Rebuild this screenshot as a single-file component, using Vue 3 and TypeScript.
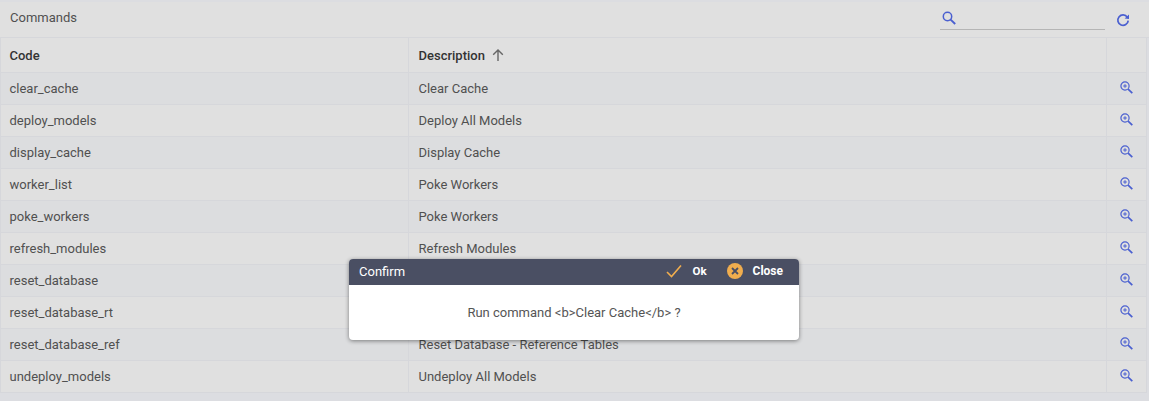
<script setup lang="ts">
interface Command { code: string; description: string }
const commands: Command[] = [
  { code: 'clear_cache', description: 'Clear Cache' },
  { code: 'deploy_models', description: 'Deploy All Models' },
  { code: 'display_cache', description: 'Display Cache' },
  { code: 'worker_list', description: 'Poke Workers' },
  { code: 'poke_workers', description: 'Poke Workers' },
  { code: 'refresh_modules', description: 'Refresh Modules' },
  { code: 'reset_database', description: '' },
  { code: 'reset_database_rt', description: '' },
  { code: 'reset_database_ref', description: 'Reset Database - Reference Tables' },
  { code: 'undeploy_models', description: 'Undeploy All Models' },
]
</script>

<template>
  <div class="page">
    <div class="toolbar">
      <span class="title">Commands</span>
      <div class="search">
        <svg width="14" height="14" viewBox="0 0 14 14" fill="none" stroke="#4a5fd0" stroke-width="1.5">
          <circle cx="5.5" cy="5.5" r="4.2" />
          <path d="M8.6 8.6l4.6 4.4" stroke-width="1.9" />
        </svg>
      </div>
      <svg class="refresh" width="14" height="14" viewBox="0 0 14 14" fill="none">
        <path d="M11.3 4.2A5.2 5.2 0 1 0 12.2 7.6" stroke="#4a5fd0" stroke-width="1.7" />
        <path d="M8.6 5.6L13 1.4V5.9Z" fill="#4a5fd0" />
      </svg>
    </div>
    <div class="table">
      <div class="row head">
        <div class="cell">Code</div>
        <div class="cell">Description
          <svg class="sort" width="14" height="14" viewBox="0 0 14 14" fill="none" stroke="#666" stroke-width="1.4">
            <path d="M7 13V2M2.2 6.8L7 2l4.8 4.8" />
          </svg>
        </div>
        <div class="cell"></div>
      </div>
      <div v-for="c in commands" :key="c.code" class="row body">
        <div class="cell">{{ c.code }}</div>
        <div class="cell">{{ c.description }}</div>
        <div class="cell action">
          <svg width="13" height="13" viewBox="0 0 13 13" fill="none" stroke="#4a5fd0" stroke-width="1.2">
            <circle cx="5" cy="5" r="4.1" />
            <path d="M8.1 8.1l4.2 4.1" stroke-width="1.7" />
            <path d="M5 3.2v3.6M3.2 5h3.6" stroke-width="1" />
          </svg>
        </div>
      </div>
    </div>
    <div class="dialog">
      <div class="dialog-head">
        <span class="dialog-title">Confirm</span>
        <button class="btn ok" type="button">
          <svg width="16" height="14" viewBox="0 0 16 14" fill="none" stroke="#f0ad4e" stroke-width="1.6">
            <path d="M1 8l4.5 4.5L15 1.5" />
          </svg>
          <span>Ok</span>
        </button>
        <button class="btn close" type="button">
          <svg width="16" height="16" viewBox="0 0 16 16">
            <circle cx="8" cy="8" r="8" fill="#f0ad4e" />
            <path d="M5 5l6 6M11 5l-6 6" stroke="#4a4f63" stroke-width="1.8" />
          </svg>
          <span>Close</span>
        </button>
      </div>
      <div class="dialog-body">Run command &lt;b&gt;Clear Cache&lt;/b&gt; ?</div>
    </div>
  </div>
</template>

<style>
html, body { margin: 0; padding: 0; background: #dcdde1; }
</style>

<style scoped>
.page {
  position: relative;
  width: 1149px;
  height: 401px;
  overflow: hidden;
  box-sizing: border-box;
  padding-top: 2px;
  background: #dcdde1;
  font-family: Roboto, "Liberation Sans", sans-serif;
  font-size: 13px;
  color: #505050;
}
.toolbar {
  display: flex;
  align-items: center;
  height: 35px;
  padding: 0 19px 0 10px;
  background: #e0e0e0;
  border-bottom: 1px solid #d6d7db;
}
.title { flex: 1; position: relative; top: -2px; }
.search {
  align-self: flex-start;
  width: 165px;
  height: 24px;
  margin-top: 4px;
  margin-right: 11px;
  box-sizing: border-box;
  border-bottom: 1px solid #b5b5b5;
  display: flex;
  align-items: center;
  padding-left: 2px;
}
.table {
  width: 1147px;
}
.row {
  display: grid;
  grid-template-columns: 409px 698px 40px;
  box-sizing: border-box;
  border-bottom: 1px solid #d6d7db;
}
.head { height: 35px; background: #e0e0e0; color: #333; font-weight: 500; }
.body { height: 32px; }
.body:nth-child(even) { background: #dcdddf; }
.body:nth-child(odd) { background: #e0e0e0; }
.cell {
  display: flex;
  align-items: center;
  padding-left: 9.5px;
  border-right: 1px solid #d6d7db;
}
.cell:first-child { border-left: 1px solid #d6d7db; padding-left: 8.5px; }
.sort { margin-left: 6px; }
.action { justify-content: center; padding: 0 0 3px; }
.dialog {
  position: absolute;
  left: 349px;
  top: 259px;
  width: 450px;
  height: 81px;
  background: #fff;
  border-radius: 4px;
  box-shadow: 0 1px 4px rgba(0, 0, 0, 0.45);
  overflow: hidden;
}
.dialog-head {
  display: flex;
  align-items: center;
  box-sizing: border-box;
  height: 26px;
  padding: 0 16px 2px 10px;
  background: #4a4f63;
  color: #fff;
}
.dialog-title { flex: 1; }
.btn {
  display: flex;
  align-items: center;
  border: 0;
  padding: 0;
  background: none;
  color: #fff;
  font: 700 12px Roboto, "Liberation Sans", sans-serif;
}
.ok { gap: 10px; margin-right: 20px; font-size: 11.5px; }
.close { gap: 10px; }
.dialog-body {
  height: 55px;
  display: flex;
  align-items: center;
  justify-content: center;
  color: #555;
}
</style>
